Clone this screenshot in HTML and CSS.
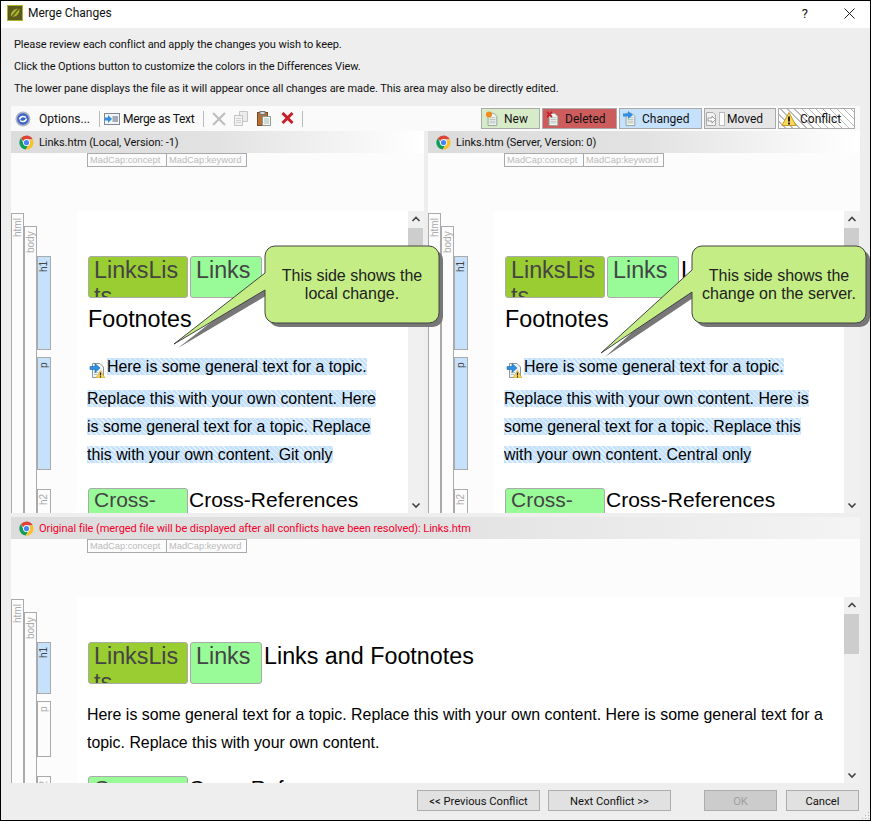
FILE: index.html
```html
<!DOCTYPE html>
<html lang="en">
<head>
	<meta charset="UTF-8">
	<title>Merge Changes</title>
	<link rel="stylesheet" href="styles.css">
</head>
<body>
	<svg class="defs" width="0" height="0">
		<symbol id="chrome" viewBox="0 0 16 16">
			<path fill="#db4437" d="M8 .5A7.5 7.5 0 0 1 14.6 4.5H8A3.6 3.6 0 0 0 4.6 6.8L2.1 3.3A7.5 7.5 0 0 1 8 .5Z"/>
			<path fill="#0f9d58" d="M2.1 3.3A7.5 7.5 0 0 0 7.2 15.5L9.6 11.2A3.6 3.6 0 0 1 4.6 9.4Z"/>
			<path fill="#fbc02d" d="M14.6 4.5A7.5 7.5 0 0 1 7.2 15.5L10.9 9.7A3.6 3.6 0 0 0 10.8 5.5Z"/>
			<circle cx="8" cy="8" r="3.6" fill="#fff"/>
			<circle cx="8" cy="8" r="2.8" fill="#4285f4"/>
		</symbol>
		<symbol id="doc" viewBox="0 0 16 16">
			<path fill="#f4f6f2" stroke="#8d9a94" d="M3.5 1.5H10L13.5 5V15.5H3.5Z"/>
			<path fill="none" stroke="#a9bdb4" d="M5 6.5H12M5 8.5H12M5 10.5H12M5 12.5H12"/>
		</symbol>
		<symbol id="warn" viewBox="0 0 16 16">
			<path fill="#fbd75b" stroke="#c49a22" d="M8 1.5L15 14.5H1Z"/>
			<path fill="none" stroke="#222" stroke-width="2" d="M8 5.5V10.5M8 11.5V13.5"/>
		</symbol>
		<symbol id="moved-warn" viewBox="0 0 16 16">
			<path fill="#eef3f6" stroke="#8d9a94" d="M3.5 1.5H11L14.5 5V15.5H3.5Z"/>
			<path fill="none" stroke="#b0c2c8" d="M5 10.5H9M5 12.5H8"/>
			<path fill="#2f8fe0" stroke="#1a68b0" stroke-width=".6" d="M1 4.5H6V1.5L11 6L6 10.5V7.5H1Z"/>
			<path fill="#fbd75b" stroke="#c49a22" stroke-width=".6" d="M11.5 8.5L16 16H7Z"/>
			<path fill="none" stroke="#222" stroke-width="1.2" d="M11.5 10.5V13.5M11.5 14.2V15.4"/>
		</symbol>
		<symbol id="chevron-up" viewBox="0 0 16 16">
			<path fill="none" stroke="#444" stroke-width="1.6" d="M4.5 10L8 6.5L11.5 10"/>
		</symbol>
		<symbol id="chevron-down" viewBox="0 0 16 16">
			<path fill="none" stroke="#444" stroke-width="1.6" d="M4.5 6.5L8 10L11.5 6.5"/>
		</symbol>
	</svg>

	<div class="window">
		<div class="titlebar">
			<svg class="app-icon" width="16" height="16" viewBox="0 0 16 16">
				<rect x=".5" y=".5" width="15" height="15" fill="#5b5a1c" stroke="#a9b52c"/>
				<path fill="#a9b52c" d="M4 12C3 7 7 3 12.5 3.5C13 8 10 12.5 4 12Z"/>
				<path fill="none" stroke="#5b5a1c" stroke-width="1.2" d="M3 14L13 2"/>
			</svg>
			<span class="title">Merge Changes</span>
			<span class="help">?</span>
			<svg class="close" width="11" height="11" viewBox="0 0 11 11">
				<path fill="none" stroke="#222" d="M.5 .5L10.5 10.5M10.5 .5L.5 10.5"/>
			</svg>
		</div>

		<div class="main">
			<div class="intro">
				<p>Please review each conflict and apply the changes you wish to keep.</p>
				<p>Click the Options button to customize the colors in the Differences View.</p>
				<p>The lower pane displays the file as it will appear once all changes are made. This area may also be directly edited.</p>
			</div>

			<div class="toolbar">
				<svg class="tool-options" width="16" height="16" viewBox="0 0 16 16">
					<circle cx="8" cy="8" r="7.5" fill="#aeb6c6"/>
					<circle cx="8" cy="8" r="5.8" fill="#3a62c8"/>
					<path fill="none" stroke="#fff" stroke-width="1.6" d="M4.5 8.5C5 5.5 8.5 4.5 11 6.5M11.5 7.5C11 10.5 7.5 11.5 5 9.5"/>
				</svg>
				<span class="tool-label">Options...</span>
				<span class="tool-sep"></span>
				<svg class="tool-merge" width="16" height="12" viewBox="0 0 16 12">
					<rect x=".5" y=".5" width="15" height="11" fill="#f2f4f7" stroke="#7d8796"/>
					<path fill="none" stroke="#59626f" d="M8.5 4H14M8.5 6H14M8.5 8H14"/>
					<path fill="#2f8fe0" d="M1 4.5H4V2L8 6L4 10V7.5H1Z"/>
				</svg>
				<span class="tool-label tool-label-merge">Merge as Text</span>
				<span class="tool-sep"></span>
				<svg class="tool-cut" width="14" height="14" viewBox="0 0 14 14">
					<path fill="none" stroke="#bdbdbd" stroke-width="2" d="M1 1L13 13M13 1L1 13"/>
				</svg>
				<svg class="tool-copy" width="14" height="15" viewBox="0 0 14 15">
					<path fill="#ececec" stroke="#c4c4c4" d="M5.5 .5H13.5V10.5H5.5Z"/>
					<path fill="#f2f2f2" stroke="#c4c4c4" d="M.5 4.5H8.5V14.5H.5Z"/>
					<path fill="none" stroke="#d2d2d2" d="M2 7.5H7M2 9.5H7M2 11.5H7"/>
				</svg>
				<svg class="tool-paste" width="14" height="15" viewBox="0 0 14 15">
					<rect x=".5" y="1.5" width="10" height="13" fill="#b5703a" stroke="#7d4a22"/>
					<rect x="3" y=".5" width="5" height="3" fill="#d4d4d4" stroke="#777"/>
					<path fill="#f4f6f2" stroke="#8d9a94" d="M5.5 5.5H13.5V14.5H5.5Z"/>
					<path fill="none" stroke="#a9bdb4" d="M7 8H12M7 10H12M7 12H12"/>
				</svg>
				<svg class="tool-delete" width="13" height="12" viewBox="0 0 13 12">
					<path fill="none" stroke="#c8202a" stroke-width="3" d="M1.5 1L11.5 11M11.5 1L1.5 11"/>
				</svg>
				<span class="tool-sep tool-sep-last"></span>

				<div class="legend">
					<span class="legend-item legend-new">
						<svg width="14" height="16"><use href="#doc"/><circle cx="4" cy="3.5" r="3" fill="#f08a1d"/></svg>New
					</span>
					<span class="legend-item legend-deleted">
						<svg width="14" height="16"><use href="#doc"/><path fill="none" stroke="#c8202a" stroke-width="1.8" d="M1 1L6 6M6 1L1 6"/></svg>Deleted
					</span>
					<span class="legend-item legend-changed">
						<svg width="14" height="16"><use href="#doc"/><path fill="#2f8fe0" d="M0 2.5H5V0L10 4L5 8V5.5H0Z"/></svg>Changed
					</span>
					<span class="legend-item legend-moved">
						<svg width="19" height="16" viewBox="0 0 19 16">
							<path fill="#f2f2f2" stroke="#aaa" d="M.5 1.5H7L9.5 4V14.5H.5Z"/>
							<path fill="#fff" stroke="#888" stroke-width=".8" d="M2 7H6V5L9.5 8.5L6 12V10H2Z"/>
							<rect x="13.5" y="1.5" width="5" height="13" fill="#fff" stroke="#bbb"/>
						</svg>Moved
					</span>
					<span class="legend-item legend-conflict">
						<svg width="18" height="16"><use href="#warn"/></svg>Conflict
					</span>
				</div>
			</div>

			<div class="split-top">
				<section class="pane pane-local">
					<div class="pane-header">
						<svg width="15" height="15"><use href="#chrome"/></svg>
						<span>Links.htm (Local, Version: -1)</span>
					</div>
					<div class="pane-head">
						<span class="meta-tag">MadCap:concept</span><span class="meta-tag">MadCap:keyword</span>
					</div>
					<div class="pane-view">
						<div class="gutter">
							<div class="strip-col strip-html"><span class="strip strip-full">html</span></div>
							<div class="strip-col strip-body"><span class="strip strip-full">body</span></div>
							<div class="strip-col strip-blocks">
								<span class="strip strip-on strip-top-h1">h1</span>
								<span class="strip strip-on strip-top-p">p</span>
								<span class="strip strip-h2">h2</span>
							</div>
						</div>
						<div class="page">
							<h1><span class="h-box h-box-lists">LinksLists</span><span class="h-box h-box-links">Links</span>Links and Footnotes</h1>
							<p class="para">
								<svg class="change-icon" width="16" height="16"><use href="#moved-warn"/></svg><span class="changed">Here is some general text for a topic. Replace this with your own content. Here is some general text for a topic. Replace this with your own content. Git only</span>
							</p>
							<h2><span class="h-box h-box-links h-box-cross">Cross-References</span>Cross-References</h2>
						</div>
						<div class="scrollbar">
							<svg width="16" height="16"><use href="#chevron-up"/></svg>
							<div class="track"><div class="thumb"></div></div>
							<svg width="16" height="16"><use href="#chevron-down"/></svg>
						</div>
					</div>
				</section>

				<section class="pane pane-server">
					<div class="pane-header">
						<svg width="15" height="15"><use href="#chrome"/></svg>
						<span>Links.htm (Server, Version: 0)</span>
					</div>
					<div class="pane-head">
						<span class="meta-tag">MadCap:concept</span><span class="meta-tag">MadCap:keyword</span>
					</div>
					<div class="pane-view">
						<div class="gutter">
							<div class="strip-col strip-html"><span class="strip strip-full">html</span></div>
							<div class="strip-col strip-body"><span class="strip strip-full">body</span></div>
							<div class="strip-col strip-blocks">
								<span class="strip strip-on strip-top-h1">h1</span>
								<span class="strip strip-on strip-top-p">p</span>
								<span class="strip strip-h2">h2</span>
							</div>
						</div>
						<div class="page">
							<h1><span class="h-box h-box-lists">LinksLists</span><span class="h-box h-box-links">Links</span>Links and Footnotes</h1>
							<p class="para">
								<svg class="change-icon" width="16" height="16"><use href="#moved-warn"/></svg><span class="changed">Here is some general text for a topic. Replace this with your own content. Here is some general text for a topic. Replace this with your own content. Central only</span>
							</p>
							<h2><span class="h-box h-box-links h-box-cross">Cross-References</span>Cross-References</h2>
						</div>
						<div class="scrollbar">
							<svg width="16" height="16"><use href="#chevron-up"/></svg>
							<div class="track"><div class="thumb"></div></div>
							<svg width="16" height="16"><use href="#chevron-down"/></svg>
						</div>
					</div>
				</section>
			</div>

			<section class="pane pane-merged">
				<div class="pane-header pane-header-original">
					<svg width="15" height="15"><use href="#chrome"/></svg>
					<span>Original file (merged file will be displayed after all conflicts have been resolved): Links.htm</span>
				</div>
				<div class="pane-head">
					<span class="meta-tag">MadCap:concept</span><span class="meta-tag">MadCap:keyword</span>
				</div>
				<div class="pane-view">
					<div class="gutter">
						<div class="strip-col strip-html"><span class="strip strip-full">html</span></div>
						<div class="strip-col strip-body"><span class="strip strip-full">body</span></div>
						<div class="strip-col strip-blocks">
							<span class="strip strip-on strip-low-h1">h1</span>
							<span class="strip strip-low-p">p</span>
							<span class="strip strip-h2">h2</span>
						</div>
					</div>
					<div class="page">
						<h1><span class="h-box h-box-lists">LinksLists</span><span class="h-box h-box-links">Links</span>Links and Footnotes</h1>
						<p class="para">Here is some general text for a topic. Replace this with your own content. Here is some general text for a topic. Replace this with your own content.</p>
						<h2><span class="h-box h-box-links h-box-cross">Cross-References</span>Cross-References</h2>
					</div>
					<div class="scrollbar">
						<svg width="16" height="16"><use href="#chevron-up"/></svg>
						<div class="track"><div class="thumb"></div></div>
						<svg width="16" height="16"><use href="#chevron-down"/></svg>
					</div>
				</div>
			</section>

			<div class="footer">
				<button class="btn btn-wide">&lt;&lt; Previous Conflict</button>
				<button class="btn btn-wide">Next Conflict &gt;&gt;</button>
				<button class="btn btn-ok" disabled>OK</button>
				<button class="btn">Cancel</button>
			</div>
		</div>

		<!-- callouts lie over the panes -->
		<div class="callout callout-local">
			<svg width="280" height="115" viewBox="0 0 280 115">
				<path class="callout-shadow" d="M105 6H259a10 10 0 0 1 10 10V73a10 10 0 0 1-10 10H105a10 10 0 0 1-10-10V50L4 104L95 33V16a10 10 0 0 1 10-10Z"/>
				<path class="callout-shape" d="M105 6H259a10 10 0 0 1 10 10V73a10 10 0 0 1-10 10H105a10 10 0 0 1-10-10V50L4 104L95 33V16a10 10 0 0 1 10-10Z"/>
			</svg>
			<div class="callout-text">This side shows the<br>local change.</div>
		</div>
		<div class="callout callout-server">
			<svg width="280" height="125" viewBox="0 0 280 125">
				<path class="callout-shadow" d="M105 6H259a10 10 0 0 1 10 10V73a10 10 0 0 1-10 10H105a10 10 0 0 1-10-10V52L4 113L95 30V16a10 10 0 0 1 10-10Z"/>
				<path class="callout-shape" d="M105 6H259a10 10 0 0 1 10 10V73a10 10 0 0 1-10 10H105a10 10 0 0 1-10-10V52L4 113L95 30V16a10 10 0 0 1 10-10Z"/>
			</svg>
			<div class="callout-text">This side shows the<br>change on the server.</div>
		</div>

		<svg class="grip" width="8" height="8" viewBox="0 0 8 8">
			<path fill="#b5b5b5" d="M6 0h1v1H6zM3 3h1v1H3zM6 3h1v1H6zM0 6h1v1H0zM3 6h1v1H3zM6 6h1v1H6z"/>
		</svg>
	</div>
</body>
</html>
```

FILE: styles.css
```css
* {
	margin: 0;
	padding: 0;
	box-sizing: border-box;
}
body {
	background-color: #eee;
	font-family: "Roboto", "Liberation Sans", sans-serif;
	font-size: 12px;
	color: #111;
}
svg {
	flex: none;
}
.defs {
	position: absolute;
}
.window {
	position: relative;
	display: flex;
	flex-direction: column;
	width: 871px;
	height: 821px;
	border: 1px solid #000;
	background-color: #eee;
	overflow: hidden;
}

/* title bar */
.titlebar {
	display: flex;
	align-items: center;
	flex: none;
	height: 27px;
	padding: 0 0 3px 6px;
	background-color: #fff;
}
.app-icon {
	margin-right: 5px;
}
.help {
	margin-left: auto;
	font-size: 13px;
}
.close {
	margin-left: 36px;
	margin-right: 15px;
}

/* main */
.main {
	display: flex;
	flex-direction: column;
	flex: 1;
	padding: 0 10px;
}
.intro {
	flex: none;
	height: 78px;
	padding: 6px 3px 0;
	font-size: 11px;
	letter-spacing: -.07px;
}
.intro p {
	line-height: 22px;
}

/* toolbar */
.toolbar {
	display: flex;
	align-items: center;
	flex: none;
	height: 25px;
	padding-left: 4px;
	background-color: #fafafa;
}
.tool-label {
	white-space: nowrap;
}
.tool-label-merge {
	letter-spacing: -.3px;
}
.tool-options {
	margin-right: 8px;
}
.tool-sep {
	width: 1px;
	height: 16px;
	margin: 0 8px 0 9px;
	background-color: #bbb;
}
.tool-merge {
	margin-left: -4px;
	margin-right: 3px;
}
.tool-cut {
	margin-right: 8px;
}
.tool-copy {
	margin-right: 9px;
}
.tool-paste {
	margin-right: 10px;
}
.tool-delete {
	margin-bottom: 2px;
}
.tool-sep-last {
	margin: 0 0 0 8px;
}
.legend {
	display: flex;
	gap: 2px;
	margin-left: auto;
	padding-right: 5px;
}
.legend-item {
	display: flex;
	align-items: center;
	gap: 5px;
	height: 21px;
	padding-left: 3px;
	border: 1px solid #a9a9a9;
}
.legend-new {
	width: 59px;
	background-color: #d8ebc8;
}
.legend-deleted {
	width: 75px;
	background-color: #cd5c5c;
}
.legend-changed {
	width: 83px;
	background-color: #c5e1fb;
}
.legend-moved {
	width: 72px;
	gap: 2px;
	padding-left: 1px;
	background-color: #e6e6e6;
}
.legend-conflict {
	width: 77px;
	gap: 2px;
	padding-left: 1px;
	background: repeating-linear-gradient(45deg, #fff, #fff 4px, #bbb 4px, #bbb 5px);
}

/* panes */
.split-top {
	display: flex;
	gap: 4px;
	flex: none;
	height: 382px;
	margin-bottom: 4px;
}
.pane {
	display: flex;
	flex-direction: column;
	overflow: hidden;
	background-color: #fcfcfc;
}
.pane-local {
	width: 413px;
}
.pane-server {
	width: 432px;
}
.pane-merged {
	flex: none;
	height: 266px;
}
.pane-header {
	display: flex;
	align-items: center;
	gap: 5px;
	flex: none;
	height: 22px;
	padding-left: 8px;
	font-size: 11px;
	letter-spacing: -.07px;
	background: linear-gradient(to right, #dcdcdc, #e2e2e2 50%, #fff);
}
.pane-header-original {
	color: #f5002d;
	background: linear-gradient(to right, #dcdcdc, #e2e2e2 50%, #f4f4f4);
}
.pane-head {
	flex: none;
	height: 58px;
	padding-left: 76px;
	font-size: 0;
}
.meta-tag {
	display: inline-block;
	width: 80px;
	height: 14px;
	padding-left: 2px;
	border: 1px solid #aaa;
	font-family: "Liberation Sans", sans-serif;
	font-size: 9.3px;
	letter-spacing: 0;
	line-height: 12px;
	color: #bbb;
}
.meta-tag + .meta-tag {
	border-left: 0;
}
.pane-view {
	display: flex;
	flex: 1;
	min-height: 0;
}

/* element strips */
.gutter {
	display: flex;
	flex: none;
	width: 66px;
	overflow: hidden;
}
.strip-col {
	display: flex;
	flex-direction: column;
	flex: none;
	width: 13px;
}
.strip-html {
	padding-top: 2px;
}
.strip-body {
	padding-top: 15px;
}
.strip-blocks {
	width: 14px;
	padding-top: 45px;
}
/* rotated half a turn, so its bottom edge is the top on screen */
.strip {
	display: block;
	flex: none;
	padding-bottom: 4px;
	border: 1px solid #aaa;
	writing-mode: vertical-rl;
	transform: rotate(180deg);
	text-align: right;
	font-family: "Liberation Sans", sans-serif;
	font-size: 10px;
	line-height: 11px;
	color: #aaa;
}
.strip-full {
	flex: 1;
	border-top: 0;
}
.strip-h2 {
	height: 60px;
	border-top: 0;
}
.strip-on {
	background-color: #c5e1fb;
	color: #444;
}
.strip-top-h1 {
	height: 94px;
}
.strip-top-p {
	height: 113px;
	margin-top: 7px;
}
.strip-top-p + .strip-h2 {
	margin-top: 19px;
}
.strip-low-h1 {
	height: 52px;
}
.strip-low-p {
	height: 56px;
	margin-top: 7px;
}
.strip-low-p + .strip-h2 {
	margin-top: 19px;
}

/* page */
.page {
	flex: 1;
	min-width: 0;
	padding: 45px 21px 0 11px;
	overflow: hidden;
	background-color: #fff;
	font-family: "Liberation Sans", sans-serif;
	color: #000;
}
.page h1 {
	font-size: 23.3px;
	font-weight: normal;
	line-height: 28px;
}
.page h2 {
	margin-top: 19px;
	font-size: 21px;
	font-weight: normal;
	line-height: 24px;
}
.h-box {
	display: inline-block;
	height: 42px;
	margin: 0 2px 7px 0;
	padding-left: 5px;
	border: 1px solid #aaa;
	border-radius: 3px;
	overflow: hidden;
	vertical-align: top;
	word-break: break-all;
	line-height: 26px;
	color: #444;
}
.h-box-lists {
	width: 100px;
	padding-right: 6px;
	background-color: #9acd32;
}
.h-box-links {
	width: 72px;
	background-color: #98fb98;
}
.h-box-cross {
	width: 100px;
	margin: 0 1px 0 0;
	word-break: normal;
	line-height: 22px;
}
.para {
	margin-top: 20px;
	margin-left: -1px;
	font-size: 15.9px;
	line-height: 28px;
}
.pane-merged .para {
	margin-top: 10px;
}
.change-icon {
	display: inline-block;
	margin-left: 2px;
	margin-right: 2px;
	margin-bottom: 6.5px;
	vertical-align: -12.5px;
}
.changed {
	background: repeating-linear-gradient(45deg, #c5e1fb, #c5e1fb 2.5px, #e6f2fe 2.5px, #e6f2fe 3.5px);
}

/* scrollbar */
.scrollbar {
	display: flex;
	flex-direction: column;
	flex: none;
	width: 16px;
	background-color: #f0f0f0;
}
.track {
	flex: 1;
}
.thumb {
	width: 15px;
	height: 40px;
	margin-top: 1px;
	background-color: #cdcdcd;
}

/* footer */
.footer {
	display: flex;
	align-items: flex-start;
	flex: 1;
	padding: 7px 1px 0 0;
}
.btn {
	width: 73px;
	height: 21px;
	margin-left: 9px;
	padding-top: 1px;
	border: 1px solid #adadad;
	background-color: #e1e1e1;
	font-family: "Roboto", "Liberation Sans", sans-serif;
	font-size: 11.2px;
	color: #111;
}
.btn-wide {
	width: 123px;
	margin-left: 8px;
}
.btn-wide:first-child {
	margin-left: auto;
}
.btn-ok {
	margin-left: 33px;
	background-color: #ccc;
	color: #a0a0a0;
}

/* callouts */
.callout {
	position: absolute;
	top: 239px;
}
.callout svg {
	display: block;
}
.callout-local {
	left: 169px;
}
.callout-server {
	left: 596px;
}
.callout-shadow {
	fill: #777;
	transform: translate(4px, 4px);
}
.callout-shape {
	fill: #c4ee85;
	stroke: #444;
}
.callout-text {
	position: absolute;
	top: 27px;
	left: 95px;
	width: 174px;
	font-family: "Liberation Sans", sans-serif;
	font-size: 16px;
	line-height: 18px;
	text-align: center;
	color: #222;
}
.grip {
	position: absolute;
	right: 0;
	bottom: 0;
}
```
